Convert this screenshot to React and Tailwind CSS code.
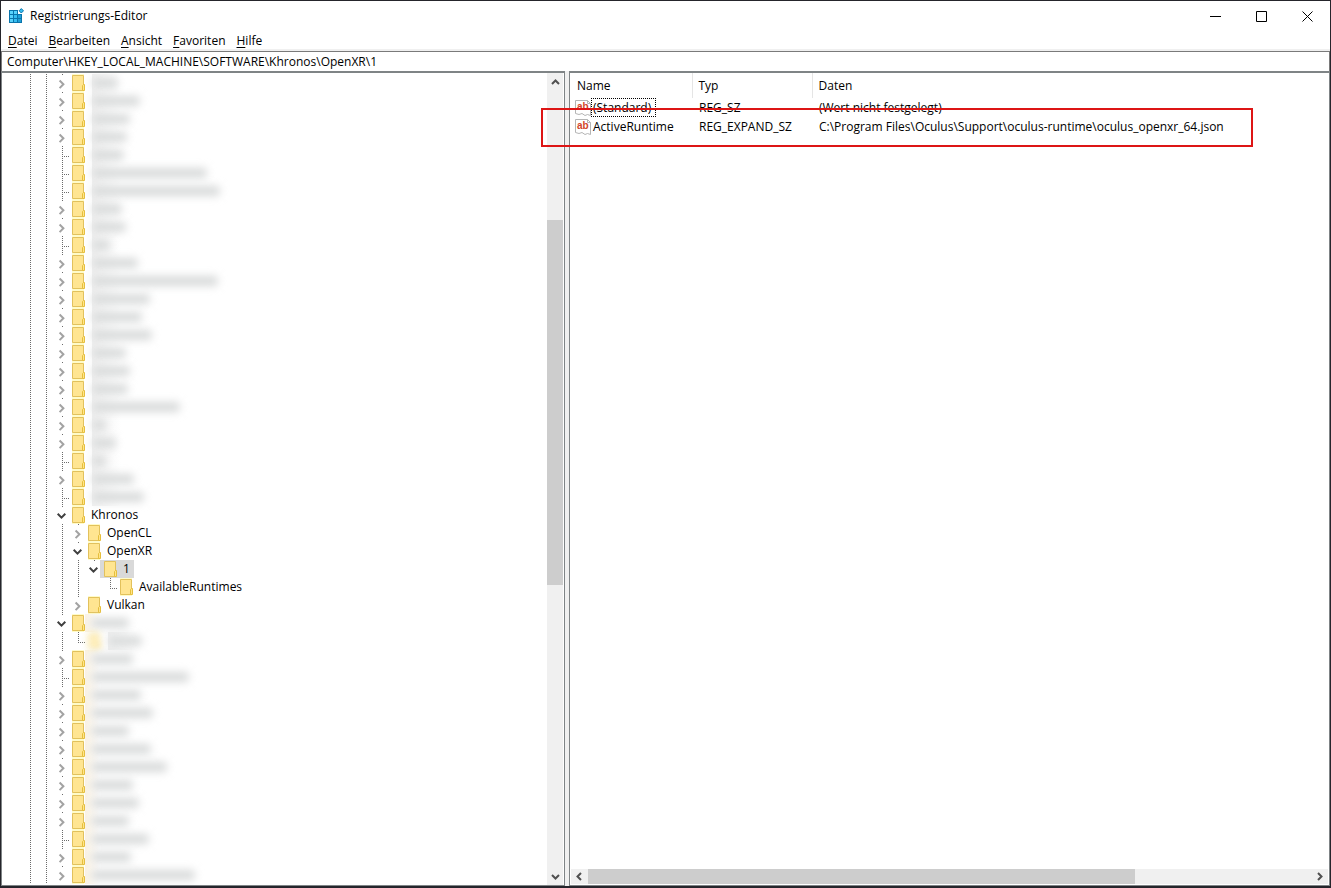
import React, { useState } from 'react';

const FONT = "font-['Open_Sans','Noto_Sans',sans-serif]";

// state: 'closed' | 'open' | 'leaf' | 'end'
// hidden: width of the redacted label
const NODES = [
  { state: 'closed', hidden: 26 },
  { state: 'closed', hidden: 48 },
  { state: 'closed', hidden: 38 },
  { state: 'closed', hidden: 35 },
  { state: 'leaf', hidden: 32 },
  { state: 'leaf', hidden: 115 },
  { state: 'leaf', hidden: 128 },
  { state: 'closed', hidden: 30 },
  { state: 'closed', hidden: 34 },
  { state: 'leaf', hidden: 18 },
  { state: 'closed', hidden: 46 },
  { state: 'closed', hidden: 126 },
  { state: 'closed', hidden: 58 },
  { state: 'closed', hidden: 50 },
  { state: 'closed', hidden: 60 },
  { state: 'closed', hidden: 34 },
  { state: 'closed', hidden: 38 },
  { state: 'closed', hidden: 36 },
  { state: 'closed', hidden: 88 },
  { state: 'closed', hidden: 14 },
  { state: 'closed', hidden: 24 },
  { state: 'leaf', hidden: 14 },
  { state: 'closed', hidden: 42 },
  { state: 'leaf', hidden: 52 },
  { state: 'open', label: 'Khronos' },
  { state: 'closed', label: 'OpenCL', guides: ['line'] },
  { state: 'open', label: 'OpenXR', guides: ['line'] },
  { state: 'open', label: '1', guides: ['line', 'line'] },
  { state: 'end', label: 'AvailableRuntimes', guides: ['line', 'line', 'none'] },
  { state: 'closed', label: 'Vulkan', guides: ['line'] },
  { state: 'open', hidden: 38, warm: true },
  { state: 'end', hidden: 34, guides: ['line'], soft: true },
  { state: 'closed', hidden: 42, warm: true },
  { state: 'leaf', hidden: 98, warm: true },
  { state: 'closed', hidden: 50, warm: true },
  { state: 'closed', hidden: 62, warm: true },
  { state: 'closed', hidden: 38, warm: true },
  { state: 'closed', hidden: 60, warm: true },
  { state: 'closed', hidden: 76, warm: true },
  { state: 'closed', hidden: 42, warm: true },
  { state: 'closed', hidden: 48, warm: true },
  { state: 'closed', hidden: 38, warm: true },
  { state: 'leaf', hidden: 58, warm: true },
  { state: 'closed', hidden: 40, warm: true },
  { state: 'closed', hidden: 104, warm: true },
];

const MENU = ['Datei', 'Bearbeiten', 'Ansicht', 'Favoriten', 'Hilfe'];

const VALUES = [
  { name: '(Standard)', type: 'REG_SZ', data: '(Wert nicht festgelegt)' },
  {
    name: 'ActiveRuntime',
    type: 'REG_EXPAND_SZ',
    data: 'C:\\Program Files\\Oculus\\Support\\oculus-runtime\\oculus_openxr_64.json',
  },
];

const GUIDE_PATHS = {
  line: 'M10.5 0V18',
  leaf: 'M10.5 0V18M10 10.5H18',
  end: 'M10.5 0V11M10 10.5H18',
  closed: 'M10.5 0V1',
  open: 'M10.5 0V1',
  none: '',
};

const Guide = ({ kind }) => (
  <svg className="h-[18px] w-4 shrink-0 overflow-visible" viewBox="0 0 16 18" fill="none" aria-hidden="true">
    <path d={GUIDE_PATHS[kind]} stroke="#6b6b6b" strokeDasharray="1 1" shapeRendering="crispEdges" />
    {kind === 'closed' && <path d="M7.6 6.5L11.4 10.3L7.6 14.1" stroke="#a3a3a3" strokeWidth="2" />}
    {kind === 'open' && <path d="M5.7 7.8L9.5 11.6L13.3 7.8" stroke="#404040" strokeWidth="2" />}
  </svg>
);

const Folder = ({ plain }) => (
  <svg className="block h-[18px] w-[18px] shrink-0" viewBox="0 0 18 18" aria-hidden="true">
    {!plain && <path d="M4 0H16V18H4Z" fill="#fffbc8" />}
    <path d="M4.5 1.5H15.5V16.5H4.5Z" fill="#ffe591" stroke="#e2c15c" />
    <path d="M14.5 16.5V11.5L15.5 10.5H16.5V16.5Z" fill="#ffe48a" stroke="#e6bf3c" />
  </svg>
);

const Redacted = ({ width, warm }) => (
  <span
    className={`flex h-[18px] w-36 items-center bg-linear-to-r to-transparent ${
      warm ? '-ml-px from-[#fbf3e4] pl-1.5 to-10%' : 'ml-1.5 from-[#f1f1f1] to-20%'
    }`}
  >
    <span className="h-2.5 rounded-sm bg-[#d8dada] blur-[4px]" style={{ width }} />
  </span>
);

const TreeRow = ({ node, selected, onSelect }) => {
  const { state, label, hidden, guides = [], soft, warm } = node;
  const expandable = state === 'open' || state === 'closed';

  return (
    <li className="flex h-[18px] items-center">
      <Guide kind="line" />
      <Guide kind="line" />
      {guides.map((kind, i) => (
        <Guide key={i} kind={kind} />
      ))}
      {expandable ? (
        <button type="button" aria-label="Schlüssel auf- oder zuklappen" className="shrink-0">
          <Guide kind={state} />
        </button>
      ) : (
        <Guide kind={state} />
      )}
      <button
        type="button"
        onClick={onSelect}
        aria-label={label || 'Unkenntlicher Schlüssel'}
        className={`flex h-[18px] items-center pr-1 whitespace-nowrap ${selected ? 'bg-[#d9d9d9]' : ''}`}
      >
        <span className={soft ? 'opacity-60 blur-[3px]' : ''}>
          <Folder plain={selected} />
        </span>
        {label && <span className="pl-[5px] leading-4">{label}</span>}
        {hidden && <Redacted width={hidden} warm={warm} />}
      </button>
    </li>
  );
};

const ARROWS = {
  up: 'M5 11L8.5 7.5L12 11',
  down: 'M5 7L8.5 10.5L12 7',
  left: 'M10 5L6.5 8.5L10 12',
  right: 'M7 5L10.5 8.5L7 12',
};

const ScrollButton = ({ direction, label }) => (
  <button type="button" aria-label={label} className="size-[17px] shrink-0">
    <svg className="size-[17px]" viewBox="0 0 17 17" fill="none" aria-hidden="true">
      <path d={ARROWS[direction]} stroke="#505050" strokeWidth="2" />
    </svg>
  </button>
);

const RegistryIcon = () => (
  <svg className="size-4" viewBox="0 0 16 16" aria-hidden="true">
    <path d="M1 2H10V6H14V15H1Z" fill="#0a74ab" />
    <path d="M2 3H5V6H2ZM6 3H9V6H6ZM2 7H5V10H2ZM2 11H5V14H2Z" fill="#58d2fb" />
    <path d="M6 7H9V10H6ZM6 11H9V14H6Z" fill="#35bdf0" />
    <path d="M10 7H13V10H10ZM10 11H13V14H10Z" fill="#1f9fd6" />
    <path d="M13.3 .6L15.5 2.8L13.3 5L11.1 2.8Z" fill="#35bdf0" stroke="#0a74ab" />
  </svg>
);

const StringIcon = () => (
  <svg className="size-4 shrink-0" viewBox="0 0 16 16" aria-hidden="true">
    <path d="M.5 .5H12.5L15.5 3.5V15.5L12.5 14.5L10 15.5L7 13.5L4 14.5L.5 13.5Z" fill="#fff" stroke="#b5b5b5" />
    <path d="M12.5 .5V3.5H15.5" fill="none" stroke="#b5b5b5" />
    <text x="2" y="10" fontSize="10" fontWeight="700" fill="#d2452a" fontFamily="Liberation Sans">ab</text>
  </svg>
);

const WindowButton = ({ label, d }) => (
  <button type="button" aria-label={label} className="flex h-7 w-[46px] items-center justify-center">
    <svg className="size-[11px]" viewBox="0 0 11 11" fill="none" aria-hidden="true">
      <path d={d} stroke="#000" />
    </svg>
  </button>
);

export default function App() {
  const [selected, setSelected] = useState(27);
  const [path, setPath] = useState('Computer\\HKEY_LOCAL_MACHINE\\SOFTWARE\\Khronos\\OpenXR\\1');

  return (
    <div className={`flex h-screen flex-col overflow-hidden border border-b-2 border-[#25252b] bg-white text-xs text-black ${FONT}`}>
      {/* Title bar */}
      <header className="flex h-[30px] shrink-0 items-center pl-[7px]">
        <RegistryIcon />
        <h1 className="grow pl-1.5">Registrierungs-Editor</h1>
        <WindowButton label="Minimieren" d="M0 5.5H11" />
        <WindowButton label="Maximieren" d="M.5 .5H10.5V10.5H.5Z" />
        <WindowButton label="Schließen" d="M.5 .5L10.5 10.5M10.5 .5L.5 10.5" />
      </header>

      <nav className="flex h-[18px] shrink-0 items-end gap-[11px] pl-[7px]">
        {MENU.map((item) => (
          <button key={item} type="button" className="leading-4">
            <span className="underline underline-offset-2">{item[0]}</span>
            {item.slice(1)}
          </button>
        ))}
      </nav>

      <div className="shrink-0 border-t-2 border-[#f0f0f0]">
        <input
          type="text"
          aria-label="Adresse"
          value={path}
          onChange={(e) => setPath(e.target.value)}
          className="block h-5 w-full border border-b-0 border-[#7a7a7a] px-[5px] outline-none"
        />
      </div>

      <main className="flex min-h-0 grow bg-[#f0f0f0]">
        {/* Key tree */}
        <section className="flex w-[564px] shrink-0 overflow-hidden border border-t-2 border-[#7f8486] bg-white">
          <ul className="min-w-0 grow overflow-hidden pt-px pl-[18px]">
            {NODES.map((node, i) => (
              <TreeRow key={i} node={node} selected={i === selected} onSelect={() => setSelected(i)} />
            ))}
          </ul>
          <div className="mr-px flex w-4 shrink-0 flex-col items-center bg-[#f0f0f0]">
            <ScrollButton direction="up" label="Nach oben" />
            <div className="grow-[130]" />
            <div className="w-full grow-[364] bg-[#cdcdcd]" />
            <div className="grow-[283]" />
            <ScrollButton direction="down" label="Nach unten" />
          </div>
        </section>

        {/* Values of the selected key */}
        <section className="relative ml-1 flex min-w-0 grow flex-col border border-t-2 border-[#7f8486] bg-white">
          <div className="grow pl-px">
            <table className="w-full table-fixed border-collapse text-left whitespace-nowrap">
              <thead>
                <tr className="h-[25px]">
                  <th className="w-[121px] border-r border-[#e5e5e5] pl-1.5 font-normal">Name</th>
                  <th className="w-[120px] border-r border-[#e5e5e5] pl-1.5 font-normal">Typ</th>
                  <th className="pl-1.5 font-normal">Daten</th>
                </tr>
              </thead>
              <tbody>
                {VALUES.map((value, i) => (
                  <tr key={value.name} className="h-[19px]">
                    <td className="p-0 pl-1">
                      <span className="flex items-center">
                        <StringIcon />
                        <span className={`border border-dotted pr-1 pl-px leading-[17px] ${i === 0 ? 'border-black' : 'border-transparent'}`}>
                          {value.name}
                        </span>
                      </span>
                    </td>
                    <td className="p-0 pl-[7px]">{value.type}</td>
                    <td className="p-0 pl-[7px]">{value.data}</td>
                  </tr>
                ))}
              </tbody>
            </table>
          </div>
          <div className="mx-px mb-px flex h-[15px] shrink-0 items-center bg-[#f0f0f0]">
            <ScrollButton direction="left" label="Nach links" />
            <div className="h-full grow-[547] bg-[#cdcdcd]" />
            <div className="grow-[176]" />
            <ScrollButton direction="right" label="Nach rechts" />
          </div>
          {/* Highlight around the runtime entry */}
          <div className="pointer-events-none absolute top-[35px] -left-[29px] h-[39px] w-[712px] border-2 border-[#dd1515]" />
        </section>
      </main>
    </div>
  );
}
